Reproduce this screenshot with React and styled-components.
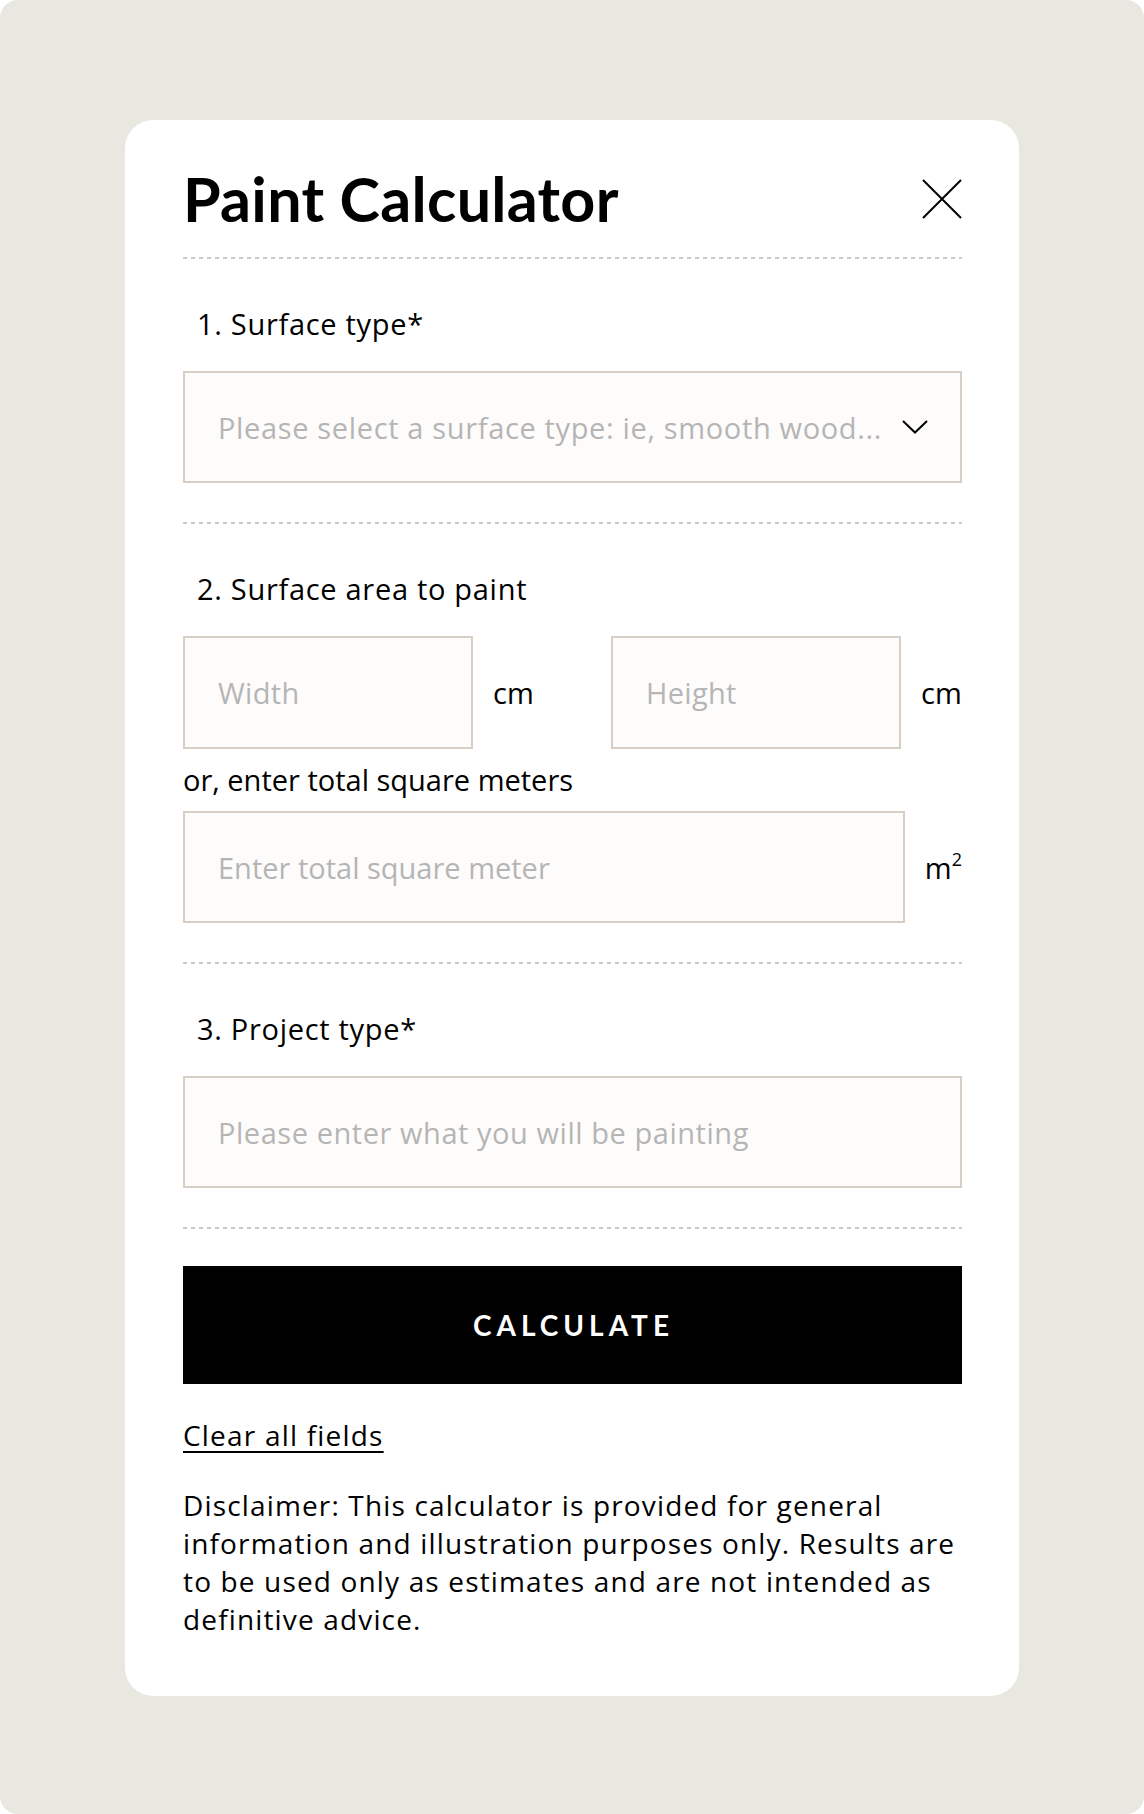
import React from "react";
import styled, { createGlobalStyle } from "styled-components";

const bodyFont = `"Open Sans", "Liberation Sans", sans-serif`;
const headFont = `Lato, "Liberation Sans", sans-serif`;

const GlobalStyle = createGlobalStyle`
  *, *::before, *::after { box-sizing: border-box; }
  html, body { margin: 0; padding: 0; background: #ffffff; }
  body { font-family: ${bodyFont}; color: #000; }
`;

const Page = styled.div`
  min-height: 1814px;
  background: #e8e7e0;
  border-radius: 18px;
  padding-top: 120px;
  display: flex;
  justify-content: center;
  align-items: flex-start;
`;

const Card = styled.div`
  width: 894px;
  background: #ffffff;
  border-radius: 28px;
  padding: 42px 57px 58px 58px;
`;

const Header = styled.div`
  display: flex;
  align-items: center;
  justify-content: space-between;
  padding-bottom: 22px;
`;

const Title = styled.h1`
  margin: 0;
  font-family: ${headFont};
  font-size: 61px;
  line-height: 73px;
  font-weight: 700;
  letter-spacing: 0.3px;
`;

const CloseButton = styled.button`
  border: 0;
  background: transparent;
  padding: 0;
  width: 40px;
  height: 40px;
  display: flex;
  cursor: pointer;
`;

const Divider = styled.div`
  height: 2px;
  background: repeating-linear-gradient(90deg, #cbcbcb 0 4px, transparent 4px 8px);
`;

const Section = styled.section`
  padding: 47px 0 39px;
`;

const Label = styled.div`
  font-size: 29px;
  line-height: 35px;
  letter-spacing: 0.7px;
  padding-left: 14px;
  margin-bottom: 30px;
`;

const fieldStyles = `
  height: 112px;
  border: 2px solid #d7cfc5;
  background: #fdfcfb;
  font-family: ${bodyFont};
  font-size: 29px;
  color: #000;
  outline: none;
  border-radius: 0;
`;

const SelectBox = styled.div`
  ${fieldStyles}
  display: flex;
  align-items: center;
  justify-content: space-between;
  padding: 0 32px 0 33px;
`;

const Placeholder = styled.span`
  color: #b5b5b5;
  white-space: nowrap;
  letter-spacing: 0.65px;
`;

const Field = styled.input`
  ${fieldStyles}
  width: ${(p) => p.$width || "100%"};
  height: ${(p) => p.$height || "112px"};
  flex: ${(p) => (p.$grow ? "1" : "none")};
  min-width: 0;
  padding: 0 32px 0 33px;
  letter-spacing: ${(p) => p.$spacing || "0.5px"};
  &::placeholder { color: #b5b5b5; }
`;

const SizeRow = styled.div`
  display: grid;
  grid-template-columns: 1fr 1fr;
  column-gap: 77px;
`;

const UnitGroup = styled.div`
  display: flex;
  align-items: center;
  gap: 20px;
`;

const Unit = styled.span`
  font-size: 29px;
  line-height: 35px;
  white-space: nowrap;
  sup { font-size: 18px; line-height: 0; vertical-align: 13px; }
`;

const OrText = styled.div`
  font-size: 29px;
  line-height: 35px;
  margin: 13px 0 14px;
`;

const ButtonArea = styled.div`
  padding-top: 37px;
`;

const CalcButton = styled.button`
  width: 100%;
  height: 118px;
  border: 0;
  background: #000;
  color: #fff;
  font-family: ${headFont};
  font-size: 28px;
  font-weight: 700;
  letter-spacing: 5px;
  padding-left: 8px;
  cursor: pointer;
`;

const ClearLink = styled.a`
  display: inline-block;
  margin-top: 34px;
  font-size: 28px;
  line-height: 34px;
  letter-spacing: 1.2px;
  color: #000;
  text-decoration: underline;
  text-decoration-thickness: 2px;
  text-underline-offset: 5px;
  cursor: pointer;
`;

const Disclaimer = styled.p`
  margin: 34px 0 0;
  font-size: 28px;
  line-height: 38px;
  letter-spacing: 1.15px;
`;

const CloseIcon = () => (
  <svg width="40" height="40" viewBox="0 0 40 40" fill="none">
    <path d="M1 1 L39 39 M39 1 L1 39" stroke="#000" strokeWidth="2" />
  </svg>
);

const Chevron = () => (
  <svg width="26" height="14" viewBox="0 0 26 14" fill="none">
    <path d="M1 1 L13 12.5 L25 1" stroke="#000" strokeWidth="2" />
  </svg>
);

export default function App() {
  return (
    <>
      <GlobalStyle />
      <Page>
        <Card>
          <Header>
            <Title>Paint Calculator</Title>
            <CloseButton aria-label="Close">
              <CloseIcon />
            </CloseButton>
          </Header>
          <Divider />

          <Section>
            <Label>1. Surface type*</Label>
            <SelectBox>
              <Placeholder>Please select a surface type: ie, smooth wood...</Placeholder>
              <Chevron />
            </SelectBox>
          </Section>
          <Divider />

          <Section>
            <Label>2. Surface area to paint</Label>
            <SizeRow>
              <UnitGroup>
                <Field $width="290px" $height="113px" $spacing="0.3px" placeholder="Width" />
                <Unit>cm</Unit>
              </UnitGroup>
              <UnitGroup>
                <Field $width="290px" $height="113px" $spacing="0.3px" placeholder="Height" />
                <Unit>cm</Unit>
              </UnitGroup>
            </SizeRow>
            <OrText>or, enter total square meters</OrText>
            <UnitGroup>
              <Field $grow $spacing="0px" placeholder="Enter total square meter" />
              <Unit>
                m<sup>2</sup>
              </Unit>
            </UnitGroup>
          </Section>
          <Divider />

          <Section>
            <Label>3. Project type*</Label>
            <Field $spacing="0.55px" placeholder="Please enter what you will be painting" />
          </Section>
          <Divider />

          <ButtonArea>
            <CalcButton>CALCULATE</CalcButton>
          </ButtonArea>
          <ClearLink>Clear all fields</ClearLink>
          <Disclaimer>
            Disclaimer: This calculator is provided for general information and illustration
            purposes only. Results are to be used only as estimates and are not intended as
            definitive advice.
          </Disclaimer>
        </Card>
      </Page>
    </>
  );
}
